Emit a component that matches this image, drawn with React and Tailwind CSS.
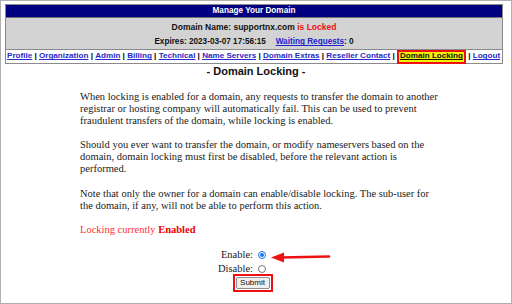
export default function App() {
  const sans = { fontFamily: '"Liberation Sans", Arial, sans-serif' };
  const serif = { fontFamily: '"Liberation Serif", "Times New Roman", serif' };
  const links = [
    "Profile",
    "Organization",
    "Admin",
    "Billing",
    "Technical",
    "Name Servers",
    "Domain Extras",
    "Reseller Contact",
  ];
  const sep = <span className="text-black">{"\u00a0|\u00a0"}</span>;
  return (
    <div className="w-[512px] h-[304px] overflow-hidden bg-white border border-[#b0b0b0] relative" style={sans}>
      <div className="ml-[4px] mr-[8px] mt-[3px] border border-[#8a8a8a]">
        <div className="h-[12px] bg-[#000080] flex items-center justify-center text-white font-bold text-[8.2px] leading-none">
          Manage Your Domain
        </div>
        <div className="bg-[#d3d3d3] border-t border-[#707070] h-[32px] pt-[2px] flex flex-col items-center justify-center gap-[3.5px] font-bold leading-[11px] text-[#111] whitespace-nowrap">
          <div className="text-[8.5px]">
            Domain Name: supportnx.com <span className="text-[#ee1111]">is Locked</span>
          </div>
          <div className="text-[8.2px]">
            Expires: 2023-03-07 17:56:15{" "}
            <span className="ml-[7.5px] text-[#2222cc] underline">Waiting Requests</span>: 0
          </div>
        </div>
        <div className="border-t border-[#8a8a8a] h-[14px] flex items-center px-[1px] text-[8.1px] font-bold leading-none text-[#2828c8] whitespace-nowrap">
          {links.map((l) => (
            <span key={l} className="flex items-center">
              <span className="underline">{l}</span>
              {sep}
            </span>
          ))}
          <span className="bg-[#f2f200] border-2 border-[#ee1111] text-[#111] underline px-[1px] h-[14px] flex items-center">
            Domain Locking
          </span>
          {sep}
          <span className="underline">Logout</span>
        </div>
      </div>
      <div className="text-center font-bold text-[11px] leading-[13px] mt-[1px] text-[#111]">- Domain Locking -</div>
      <div className="ml-[79px] w-[362px] mt-[13px] text-[10.5px] leading-[12px] text-[#1a1a1a]" style={serif}>
        <p>
          When locking is enabled for a domain, any requests to transfer the domain to another registrar or hosting
          company will automatically fail. This can be used to prevent fraudulent transfers of the domain, while locking
          is enabled.
        </p>
        <p className="mt-[12.3px]">
          Should you ever want to transfer the domain, or modify nameservers based on the domain, domain locking must
          first be disabled, before the relevant action is performed.
        </p>
        <p className="mt-[12.3px]">
          Note that only the owner for a domain can enable/disable locking. The sub-user for the domain, if any, will not
          be able to perform this action.
        </p>
        <p className="mt-[12.3px] text-[#ff3030]">
          Locking currently <b className="text-[#ee0000]">Enabled</b>
        </p>
      </div>
      <div className="mt-[12px] flex flex-col items-center text-[10.5px] leading-[14px] text-[#1a1a1a]" style={serif}>
        <div className="flex items-center h-[14px]">
          <span className="w-[60px] text-right">Enable:</span>
          <span className="ml-[5px] w-[8px] h-[8px] rounded-full border border-[#1a73e8] flex items-center justify-center">
            <span className="w-[4px] h-[4px] rounded-full bg-[#1a73e8]" />
          </span>
          <span className="w-[53px]" />
        </div>
        <div className="flex items-center h-[14px]">
          <span className="w-[60px] text-right">Disable:</span>
          <span className="ml-[5px] w-[8px] h-[8px] rounded-full border border-[#767676]" />
          <span className="w-[53px]" />
        </div>
        <div className="mt-[1.5px] mr-[7px] outline-2 outline-[#ee1111] outline-offset-[1px]">
          <div
            className="border border-[#8f8f8f] bg-[#efefef] rounded-[2px] w-[34px] h-[12px] flex items-center justify-center text-[8px] text-[#111]"
            style={sans}
          >
            Submit
          </div>
        </div>
      </div>
      <svg className="absolute left-[268px] top-[250px]" width="62" height="13" viewBox="0 0 62 13">
        <line x1="12" y1="6.5" x2="60" y2="5.5" stroke="#ee1111" strokeWidth="2.6" strokeLinecap="round" />
        <polygon points="2,6.5 15,1.5 15,11.5" fill="#ee1111" />
      </svg>
    </div>
  );
}
